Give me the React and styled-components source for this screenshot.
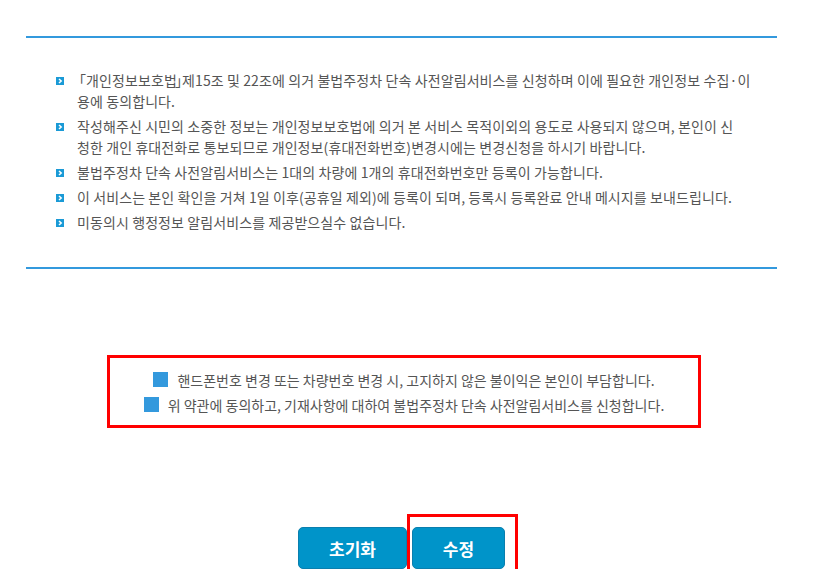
import React from 'react';
import styled, { createGlobalStyle } from 'styled-components';

const notices = [
  ['「개인정보보호법」제15조 및 22조에 의거 불법주정차 단속 사전알림서비스를 신청하며 이에 필요한 개인정보 수집·이', '용에 동의합니다.'],
  ['작성해주신 시민의 소중한 정보는 개인정보보호법에 의거 본 서비스 목적이외의 용도로 사용되지 않으며, 본인이 신', '청한 개인 휴대전화로 통보되므로 개인정보(휴대전화번호)변경시에는 변경신청을 하시기 바랍니다.'],
  ['불법주정차 단속 사전알림서비스는 1대의 차량에 1개의 휴대전화번호만 등록이 가능합니다.'],
  ['이 서비스는 본인 확인을 거쳐 1일 이후(공휴일 제외)에 등록이 되며, 등록시 등록완료 안내 메시지를 보내드립니다.'],
  ['미동의시 행정정보 알림서비스를 제공받으실수 없습니다.']
];

const agreements = [
  '핸드폰번호 변경 또는 차량번호 변경 시, 고지하지 않은 불이익은 본인이 부담합니다.',
  '위 약관에 동의하고, 기재사항에 대하여 불법주정차 단속 사전알림서비스를 신청합니다.'
];

// fullwidth corner brackets: pull in their empty half so they sit tight
const renderLine = line =>
  line.split(/([「」])/).map((part, k) =>
    part === '「' || part === '」' ? (
      <Bracket key={k} $open={part === '「'}>
        {part}
      </Bracket>
    ) : (
      part
    )
  );

const App = () => (
  <>
    <GlobalStyle />
    <Page>
      <Divider />
      <NoticeList>
        {notices.map((lines, i) => (
          <NoticeItem key={i}>
            <Bullet viewBox="0 0 8 8">
              <rect width="8" height="8" fill="#1a9ad6" />
              <polyline points="3,2 5.2,4 3,6" fill="none" stroke="#fff" strokeWidth="1.5" />
            </Bullet>
            <NoticeText>
              {lines.map((line, j) => (
                <React.Fragment key={j}>
                  {j > 0 && <br />}
                  {renderLine(line)}
                </React.Fragment>
              ))}
            </NoticeText>
          </NoticeItem>
        ))}
      </NoticeList>
      <Divider />
      <AgreeBox>
        {agreements.map(text => (
          <AgreeLine key={text}>
            <CheckSquare />
            {text}
          </AgreeLine>
        ))}
      </AgreeBox>
      <ButtonRow>
        <ActionButton $w={109}>초기화</ActionButton>
        <Highlighted>
          <ActionButton $w={93}>수정</ActionButton>
          <HighlightFrame />
        </Highlighted>
      </ButtonRow>
    </Page>
  </>
);

const GlobalStyle = createGlobalStyle`
  body {
    margin: 0;
    background: #fff;
    font-family: "Noto Sans CJK KR", "Noto Sans", sans-serif;
  }
`;

const Page = styled.div`
  width: 751px;
  margin-left: 26px;
  padding-top: 36px;
`;

const Divider = styled.div`
  height: 2px;
  background: #3399dd;
`;

const NoticeList = styled.ul`
  list-style: none;
  margin: 32px 0 34px;
  padding: 0 0 0 30px;
`;

const NoticeItem = styled.li`
  display: flex;
  align-items: flex-start;
  margin-bottom: 4px;
  &:last-child {
    margin-bottom: 0;
  }
`;

const Bullet = styled.svg`
  width: 8px;
  height: 8px;
  flex: none;
  margin: 7px 13px 0 0;
`;

const NoticeText = styled.p`
  margin: 0;
  font-size: 14px;
  line-height: 21px;
  letter-spacing: 0.1px;
  color: #555;
  white-space: nowrap;
`;

const Bracket = styled.span`
  margin: ${p => (p.$open ? '0 0 0 -5px' : '0 -7px 0 -2px')};
`;

const AgreeBox = styled.div`
  box-sizing: border-box;
  width: 594px;
  margin: 86px 0 0 81px;
  padding: 9px 0 8px;
  border: 3px solid #ff0000;
`;

const AgreeLine = styled.div`
  display: flex;
  justify-content: center;
  align-items: center;
  height: 25px;
  font-size: 14px;
  color: #555;
  white-space: pre;
`;

const CheckSquare = styled.span`
  width: 15px;
  height: 15px;
  background: #3399dd;
  margin-right: 9px;
  flex: none;
`;

const ButtonRow = styled.div`
  display: flex;
  justify-content: center;
  gap: 5px;
  margin-top: 99px;
`;

const ActionButton = styled.button`
  box-sizing: border-box;
  width: ${p => p.$w}px;
  height: 42px;
  padding: 0;
  border: 1px solid #0a7fae;
  border-radius: 5px;
  background: #0094c9;
  color: #fff;
  font-family: "Noto Sans CJK KR", sans-serif;
  font-size: 17px;
  font-weight: 700;
  cursor: pointer;
`;

const Highlighted = styled.div`
  position: relative;
`;

const HighlightFrame = styled.div`
  position: absolute;
  top: -13px;
  left: -5px;
  right: -13px;
  bottom: -11px;
  border: 3px solid #ff0000;
  pointer-events: none;
`;

export default App;
